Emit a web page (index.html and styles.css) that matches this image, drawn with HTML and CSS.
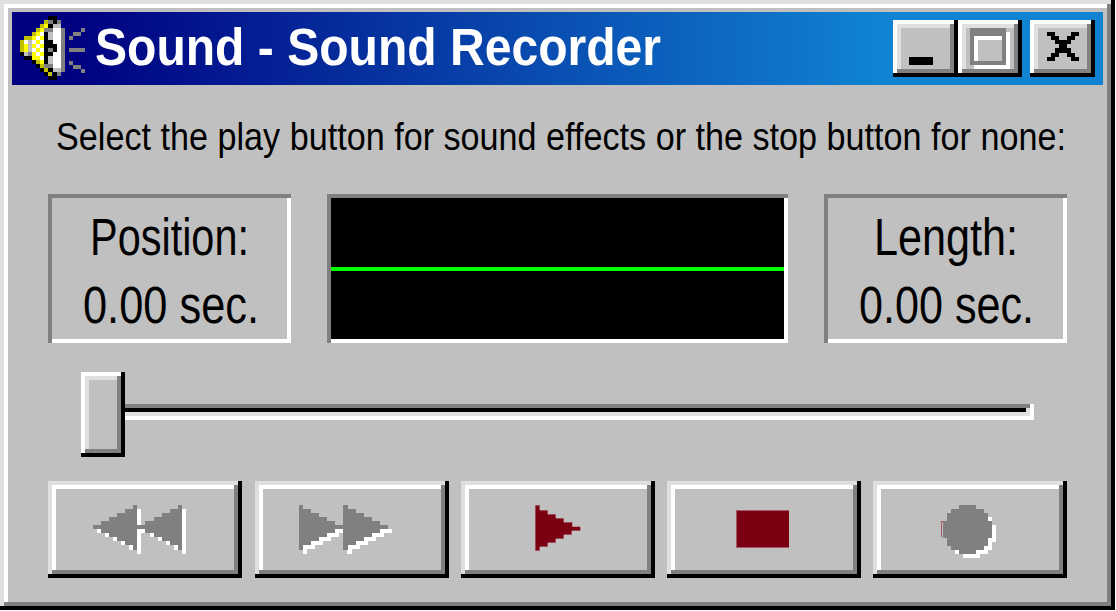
FILE: index.html
```html
<!DOCTYPE html>
<html lang="en">
<head>
<meta charset="utf-8">
<title>Sound - Sound Recorder</title>
<link rel="stylesheet" href="styles.css">
</head>
<body>
<main class="window">
  <header class="titlebar">
    <svg class="speaker" viewBox="0 0 16.25 16.25" preserveAspectRatio="none">
      <path stroke="#c0c000" d="M6 1.5h1M5 2.5h1M4 3.5h1M3 4.5h1M1 5.5h2M0 6.5h1M0 7.5h1M0 8.5h1M4 11.5h1M5 12.5h1M6 13.5h1M7 14.5h1"/>
      <path stroke="#ffff00" d="M6 2.5h1M5 3.5h1M4 4.5h1M3 5.5h1M5 5.5h1M1 6.5h1M4 6.5h1M1 7.5h1M3 7.5h1M5 7.5h1M1 8.5h1M4 8.5h1M3 9.5h1M5 9.5h1M3 10.5h2M5 11.5h1"/>
      <path stroke="#fff" d="M5 4.5h1M4 5.5h1M3 6.5h1M5 6.5h1M4 7.5h1M3 8.5h1M5 8.5h1M4 9.5h1M5 10.5h1M8 3.5h2.2M8 4.5h2.2M8 5.5h2.2M8 6.5h2.2M9 7.5h1.2M9 8.5h1.2M8 9.5h2.2M8 10.5h2.2M8 11.5h2.2M8 12.5h2.2M1 6.5h1"/>
      <path stroke="#c0c0c0" d="M8 2.5h2.2M7 4.5h1.2M7 5.5h1.2M2 6.5h1M2 7.5h1M2 8.5h1M1 9.5h1M7 10.5h1.2M7 11.5h1.2M8 13.5h2.2"/>
      <path stroke="#808080" d="M7 1.5h1.2M9.2 1.5h1M6 3.5h2.2M10.2 3.5h1M10.2 4.5h1M10.2 5.5h1M10.2 6.5h1M10.2 7.5h1M10.2 8.5h1M10.2 9.5h1M10.2 10.5h1M10.2 11.5h1M10.2 12.5h1M10.2 13.5h1M2 9.5h1M7 8.5h1.2M6 12.5h2.2M9.2 14.6h1M15.25 3.5h1M13.25 4.5h2M12.25 5.5h1M12.25 8.6h4M12.25 11.7h1M13.25 12.7h2M15.25 13.7h1"/>
      <path stroke="#000" d="M7 .5h2.2M8.2 1.5h1M7 2.5h1.2M6 4.5h1M6 5.5h1M6 6.5h2.2M6 7.5h3.2M6 8.5h1M8.2 8.5h1M0 9.5h1M6 9.5h2.2M1 10.5h2M6 10.5h1M3 11.5h1M6 11.5h1M4 12.5h1M5 13.5h1M7 13.5h1.2M6 14.5h1M8.2 14.5h1M7 15.6h2.2"/>
    </svg>
    <svg class="caption" viewBox="0 0 570 73"><text x="0" y="53" textLength="566" lengthAdjust="spacingAndGlyphs">Sound - Sound Recorder</text></svg>
    <div class="controls">
      <button class="control" aria-label="Minimize"><svg viewBox="69 60 195 171"><path d="M117 171h72v24h-72z"/></svg></button>
      <button class="control maximize" aria-label="Maximize"><svg viewBox="264 60 192 171"><path fill="#fff" d="M312 96h108v111H312z"/><path fill="#808080" d="M300 84h108v111H300z"/><path fill="#fff" d="M312 108h84v75h-84z"/><path fill="#c0c0c0" d="M324 120h72v63h-72z"/></svg></button>
      <button class="control close" aria-label="Close"><svg viewBox="480 60 195 171"><path d="M531 96h24v12h12v12h24v-12h12V96h24v12h-12v12h-12v12h-12v12h12v15h12v12h12v12h-24v-12h-12v-12h-24v12h-12v12h-24v-12h12v-12h12v-15h12v-12h-12v-12h-12v-12h-12z"/></svg></button>
    </div>
  </header>
  <svg class="instruction" viewBox="0 0 1020 60"><text x="1" y="40" textLength="1010" lengthAdjust="spacingAndGlyphs">Select the play button for sound effects or the stop button for none:</text></svg>
  <section class="status">
    <div class="panel readout"><svg viewBox="0 0 243 149">
      <text x="42" y="61" textLength="159" lengthAdjust="spacingAndGlyphs">Position:</text>
      <text x="35" y="129" textLength="176" lengthAdjust="spacingAndGlyphs">0.00 sec.</text></svg></div>
    <div class="panel scope"><div class="wave"></div></div>
    <div class="panel readout"><svg viewBox="0 0 243 149">
      <text x="50" y="61" textLength="144" lengthAdjust="spacingAndGlyphs">Length:</text>
      <text x="35" y="129" textLength="175" lengthAdjust="spacingAndGlyphs">0.00 sec.</text></svg></div>
  </section>
  <div class="slider">
    <div class="thumb"></div>
    <svg class="track" viewBox="0 0 909 16"><path fill="#fff" d="M0 0h909v16H0z"/><path fill="#dfdfdf" d="M0 4h905v8H0z"/><path fill="#808080" d="M0 0h905v4H0z"/><path d="M0 4h901v4H0z"/></svg>
  </div>
  <nav class="transport">
    <button class="key rewind" aria-label="Rewind"><svg viewBox="144 33 582 291">
      <path fill="#fff" d="M291 177h12v12h-12zM315 189h12v12h-12zM339 201h12v12h-12zM363 213h12v12h-12zM387 225h12v15h-12zM411 117h12v135h-12zM411 177h24v12h-24zM450 189h12v12h-12zM474 201h12v12h-12zM498 213h12v12h-12zM522 225h12v15h-12zM546 117h12v135h-12z"/>
      <path fill="#808080" d="M399 105h12v135h-12v-15h-24v-12h-24v-12h-24v-12h-24v-12h-24v-12h24v-12h24v-12h24v-12h24v-12h24zM534 105h12v135h-12v-15h-24v-12h-24v-12h-24v-12h-27v-12h-24v-12h24v-12h27v-12h24v-12h24v-12h24z"/></svg></button>
    <button class="key" aria-label="Fast forward"><svg viewBox="45 33 582 291">
      <defs><path id="forward" d="M177 105h12v12h24v12h24v12h24v12h24v12h24v12h-24v12h-24v12h-24v12h-24v12h-24v15h-12zM309 105h15v12h24v12h24v12h24v12h24v12h24v12h-24v12h-24v12h-24v12h-24v12h-24v15h-15z"/></defs>
      <use href="#forward" x="12" y="12" fill="#fff"/><use href="#forward" fill="#808080"/></svg></button>
    <button class="key" aria-label="Play"><svg viewBox="-117 33 582 291"><path fill="#7b0012" stroke="#ad7078" stroke-width="2" d="M106 106h13v15h24v12h24v12h24v12h25v13h25v12h-26v12h-24v12h-24v12h-24v12h-24v12h-13z"/></svg></button>
    <button class="key" aria-label="Stop"><svg viewBox="501 33 582 291"><path fill="#a45a66" d="M708 120h159v114H708z"/><path fill="#7b0012" d="M711 123h156v108H711z"/></svg></button>
    <button class="key" aria-label="Record"><svg viewBox="39 33 582 291">
      <defs><path id="record" d="M297 105h51v12h24v12h12v24h12v51h-12v24h-12v12h-24v12h-51v-12h-24v-12h-12v-24h-12v-51h12v-24h12v-12h24z"/></defs>
      <use href="#record" x="12" y="12" fill="#fff"/><use href="#record" fill="#808080"/><path fill="#a55660" d="M243 153h12v3h-9v45h-3z"/></svg></button>
  </nav>
</main>
</body>
</html>
```

FILE: styles.css
```css
* { box-sizing: border-box; }
body { margin: 0; background: #fff; overflow: hidden; font-family: "Liberation Sans", Arial, sans-serif; }
svg { display: block; overflow: visible; shape-rendering: crispEdges; }
button { padding: 0; border: 0; font: inherit; }

.window {
  width: 1115px; height: 610px; padding: 12px; background: #c0c0c0;
  box-shadow: inset -4px -4px #000, inset 4px 4px #dfdfdf, inset -8px -8px #808080, inset 8px 8px #fff;
}
.titlebar {
  display: flex; width: 1091px; height: 73px; padding-left: 8px;
  background: linear-gradient(90deg, #000080 60px, #1084d3 876px);
}
.speaker { width: 65px; height: 65px; margin-top: 4px; fill: none; stroke-width: 1.02; }
.caption { width: 570px; height: 73px; margin-left: 10px; fill: #fff; font-size: 51px; font-weight: bold; }
.controls { display: flex; margin: 8px 8px 0 auto; }
.control {
  width: 65px; height: 57px; background: #c0c0c0;
  box-shadow: inset -4px -4px #000, inset 4px 4px #fff, inset -8px -8px #808080, inset 8px 8px #dfdfdf;
}
.maximize { width: 64px; }
.close { margin-left: 8px; }
.control svg, .key svg { width: 100%; height: 100%; }

.instruction { width: 1020px; height: 60px; margin: 25px 0 0 43px; font-size: 39px; }
.status { display: grid; grid-template-columns: 243px 461px 243px; gap: 36px; height: 149px; margin: 24px 0 0 36px; }
.panel { box-shadow: inset 4px 4px #808080, inset -4px -4px #fff; }
.readout svg { width: 243px; height: 149px; font-size: 51px; }
.scope { display: flex; align-items: center; padding: 4px; background: #000; }
.wave { width: 100%; height: 4px; background: #0f0; }

.slider { display: flex; height: 85px; margin: 29px 0 0 69px; }
.thumb {
  width: 44px; height: 85px;
  box-shadow: inset -4px -4px #000, inset 4px 4px #fff, inset -8px -8px #808080, inset 8px 8px #dfdfdf;
}
.track { width: 909px; height: 16px; margin-top: 32px; }
.transport { display: flex; gap: 12px; margin: 24px 0 0 36px; }
.key {
  flex: none; width: 194px; height: 97px; background: #c0c0c0;
  box-shadow: inset -4px -4px #000, inset 4px 4px #dfdfdf, inset -8px -8px #808080, inset 8px 8px #fff;
}
.rewind { margin-right: 1px; }
```
